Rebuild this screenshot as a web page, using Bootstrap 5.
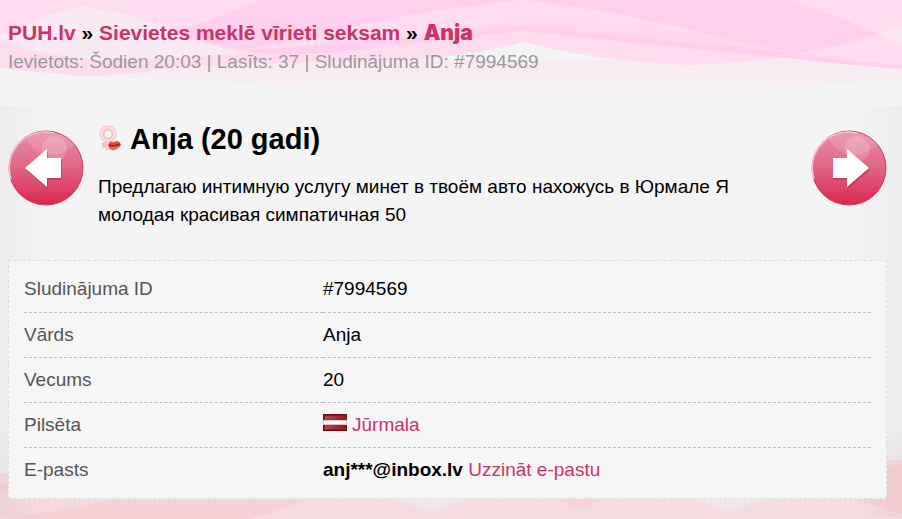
<!DOCTYPE html>
<html lang="lv">
<head>
<meta charset="utf-8">
<meta name="viewport" content="width=device-width, initial-scale=1">
<title>Anja (20 gadi) - PUH.lv</title>
<link href="https://cdn.jsdelivr.net/npm/bootstrap@5.3.0/dist/css/bootstrap.min.css" rel="stylesheet">
<style>
body{font-family:"Liberation Sans",Arial,sans-serif;font-size:19px;line-height:28px;color:#000;background:#f4f4f4}
a{color:#cc3366;text-decoration:none}
.page{min-height:100vh;overflow:hidden}
.waves{height:106px;z-index:-1}
.waves-low{height:86px;z-index:-1}
.top-area{height:106px;padding:19px 8px 0}
.trail{font-size:21px;line-height:28px;font-weight:bold}
.trail .current{font-family:Inter,"Liberation Sans",sans-serif;font-weight:900;color:#cc3366}
.meta{color:#999;margin-top:1px}
.main-area{padding:16px 15px 19px 8px;background:linear-gradient(90deg,rgba(0,0,0,.03),transparent 50px,transparent calc(100% - 50px),rgba(0,0,0,.03))}
.round-nav{width:76px;height:76px}
.ad-head{margin-bottom:31px}
.ad-copy{padding:0 14px}
h1{font-size:29px;line-height:35px;font-weight:bold;margin-bottom:16px}
.gender{width:24px;height:26px;margin:3px 8px 0 0}
.ad-text{max-width:660px}
.panel{background:#f6f6f6;border:1px dashed #ddd;padding:6px 15px}
.facts{table-layout:fixed}
.facts th{width:35.3%;font-weight:normal;color:#555}
.facts th,.facts td{height:45px;padding:0;vertical-align:middle;border-bottom:1px dashed #bbb}
.facts tr:last-child>*{border-bottom:0}
.flag{width:24px;height:17px;margin:-6px 5px 0 0}
</style>
<script src="https://cdn.jsdelivr.net/npm/bootstrap@5.3.0/dist/js/bootstrap.bundle.min.js"></script>
</head>
<body>
<div class="page position-relative z-0">
<svg class="waves position-absolute top-0 start-0 w-100" viewBox="0 0 902 106" preserveAspectRatio="none" aria-hidden="true">
<defs><linearGradient id="haze" x2="0" y2="1"><stop offset="0" stop-color="#f9eaf2"/><stop offset="1" stop-color="#f4f4f4"/></linearGradient></defs>
<path fill="#f4f4f4" d="M0 0H902V106H0Z"/>
<path fill="url(#haze)" d="M150 60H902V80Q780 86 655 106Q500 86 350 96Q250 80 82 76Z"/>
<path fill="#fedcf0" d="M0 0H902V69Q840 64 783 58Q730 64 690 65Q600 62 523 42Q450 62 350 62Q250 62 170 68Q120 76 82 76Q35 72 0 68Z"/>
<path fill="#f9e9f2" d="M0 35Q15 31 30 24Q58 10 82 6Q120 12 150 22Q200 43 240 53L170 58L100 60Q50 55 20 47Q8 42 0 40Z"/>
<path fill="#ffd0ed" d="M260 0H523Q420 10 340 30Q280 44 240 50Q205 44 172 32Q220 18 260 0Z"/>
<path fill="#ffd0ed" d="M523 0H788Q840 16 878 34Q840 45 798 54Q740 43 690 30Q600 8 523 0Z"/>
<path fill="#ffd8ee" d="M240 50Q420 42 523 19Q620 21 700 34L800 54Q650 47 523 28Q430 38 350 50Q290 60 240 50Z"/>
<path fill="#ffd0ed" d="M240 50Q300 48 350 41Q450 35 523 26Q640 36 800 54Q860 62 902 65V69Q850 65 775 57Q640 44 523 31Q430 40 350 51Q280 58 240 50Z"/>
<path fill="#fae7f2" d="M878 34L902 25V44Z"/>
</svg>
<svg class="waves-low position-absolute bottom-0 start-0 w-100" viewBox="0 0 902 86" preserveAspectRatio="none" aria-hidden="true">
<defs><linearGradient id="edge-haze" x2="0" y2="1"><stop offset="0" stop-color="#f1efef"/><stop offset="1" stop-color="#f5e7e9"/></linearGradient></defs>
<path fill="url(#edge-haze)" d="M0 0H902V86H0Z"/>
<path fill="#f5dce0" d="M0 40H400L902 27V86H0Z"/>
<path fill="#f7d1d6" d="M0 51L118 64V67H305Q280 78 250 86H0ZM858 67V35L902 31V81Q885 77 858 67Z"/>
<path fill="#f4dade" d="M0 86V59L115 66Q60 79 0 86Z"/>
<path fill="#f2e7e8" d="M390 66H470Q445 72 430 79Q415 72 390 66ZM690 66H770Q745 72 730 79Q715 72 690 66Z"/>
<path fill="#f8d2d8" d="M555 66H605L580 76Z"/>
</svg>
<header class="top-area">
<nav class="trail" aria-label="Navigācija"><a href="#">PUH.lv</a> » <a href="#">Sievietes meklē vīrieti seksam</a> » <span class="current">Anja</span></nav>
<div class="meta">Ievietots: Šodien 20:03 | Lasīts: 37 | Sludinājuma ID: #7994569</div>
</header>
<main class="main-area">
<div class="ad-head d-flex align-items-start">
<a class="round-nav flex-shrink-0 mt-2" href="#" aria-label="Iepriekšējais">
<svg class="d-block w-100 h-100" viewBox="0 0 76 76"><defs><linearGradient id="ball" x2="0" y2="1"><stop offset="0" stop-color="#e990a8"/><stop offset=".5" stop-color="#e06485"/><stop offset="1" stop-color="#da2750"/></linearGradient><clipPath id="disc"><circle cx="38" cy="38" r="37"/></clipPath></defs>
<circle cx="38" cy="38" r="37" fill="url(#ball)" stroke="#cf3b60"/>
<g clip-path="url(#disc)"><path d="M17 6Q23 21 39 25Q57 25 70 12L60 0H20Z" fill="#fff" opacity=".12"/><circle cx="46" cy="19" r="12.500" fill="#fff" opacity=".17"/></g>
<path d="M3 49A36 36 0 0 1 46 3" fill="none" stroke="#f6c5d2" stroke-width="1.500"/>
<path d="M18 40L40 21V30H54V50H40V59Z" fill="#a92647" opacity=".45"/><path d="M17 38L39 19V28H53V48H39V57Z" fill="#fff"/></svg></a>
<div class="ad-copy flex-fill">
<h1 class="d-flex align-items-start"><svg class="gender flex-shrink-0" viewBox="0 0 24 26" aria-hidden="true"><g fill="none" stroke="#f7bfc6" stroke-width="5"><circle cx="10" cy="9" r="6"/><path d="M10 15V25M4 20H16"/></g><g fill="none" stroke="#fbe0e4" stroke-width="2"><circle cx="10" cy="9" r="6.500"/><path d="M10 16V24"/></g><path d="M10 20Q12 15 15 17Q16 18 18 16Q22 16 23 20Q19 26 14 25Q11 24 10 20Z" fill="#e25345"/><path d="M11 20Q16 22 22 19" fill="none" stroke="#9d2525" stroke-width="1.500"/><path d="M13 23Q17 24 20 22" fill="none" stroke="#f78d78"/></svg>Anja (20 gadi)</h1>
<p class="ad-text mb-0">Предлагаю интимную услугу минет в твоём авто нахожусь в Юрмале Я молодая красивая симпатичная 50</p>
</div>
<a class="round-nav flex-shrink-0 mt-2" href="#" aria-label="Nākamais">
<svg class="d-block w-100 h-100" viewBox="0 0 76 76"><circle cx="38" cy="38" r="37" fill="url(#ball)" stroke="#cf3b60"/>
<g clip-path="url(#disc)"><path d="M17 6Q23 21 39 25Q57 25 70 12L60 0H20Z" fill="#fff" opacity=".12"/><circle cx="46" cy="19" r="12.500" fill="#fff" opacity=".17"/></g>
<path d="M3 49A36 36 0 0 1 46 3" fill="none" stroke="#f6c5d2" stroke-width="1.500"/>
<path d="M59 40L37 59V50H22V30H37V21Z" fill="#a92647" opacity=".45"/><path d="M58 38L36 57V48H22V28H36V19Z" fill="#fff"/></svg></a>
</div>
<section class="panel">
<table class="facts w-100">
<tbody>
<tr><th scope="row">Sludinājuma ID</th><td>#7994569</td></tr>
<tr><th scope="row">Vārds</th><td>Anja</td></tr>
<tr><th scope="row">Vecums</th><td>20</td></tr>
<tr><th scope="row">Pilsēta</th><td><svg class="flag" viewBox="0 0 24 17" aria-hidden="true"><defs><linearGradient id="flag-red" x2="1" y2="0"><stop offset="0" stop-color="#b8434a"/><stop offset="1" stop-color="#98181f"/></linearGradient></defs><path fill="#620d12" d="M0 0H24V17H0Z"/><path fill="#8f1a20" d="M1 1H23V16H1Z"/><path fill="url(#flag-red)" d="M2 2H22V15H2Z"/><path fill="#d9c4c5" d="M0 6H24V11H0Z"/><path fill="#fff" d="M1 7H23V10H1Z"/></svg><a href="#">Jūrmala</a></td></tr>
<tr><th scope="row">E-pasts</th><td><strong>anj***@inbox.lv</strong> <a href="#">Uzzināt e-pastu</a></td></tr>
</tbody>
</table>
</section>
</main>
</div>
</body>
</html>
